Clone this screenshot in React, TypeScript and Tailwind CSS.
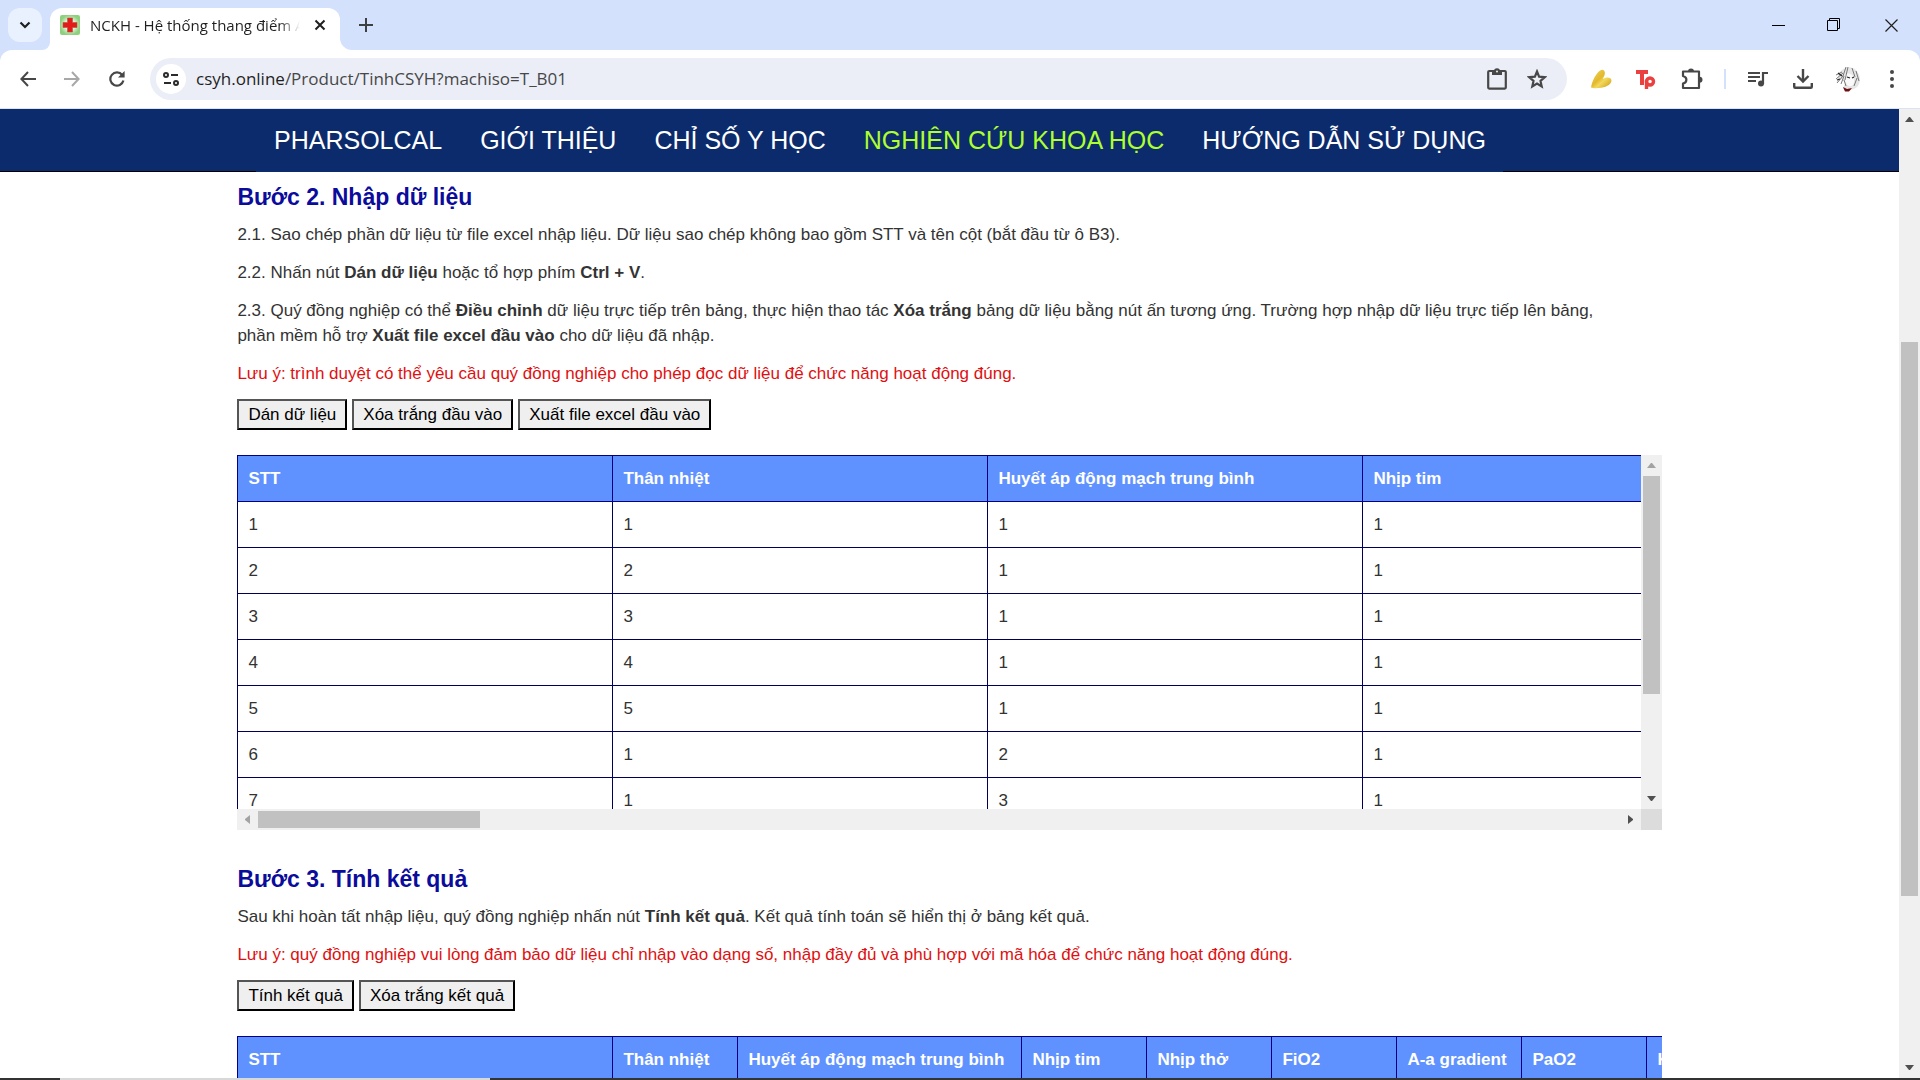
import type { ReactNode } from "react";

const navLinks = [
  { label: "PHARSOLCAL", active: false },
  { label: "GIỚI THIỆU", active: false },
  { label: "CHỈ SỐ Y HỌC", active: false },
  { label: "NGHIÊN CỨU KHOA HỌC", active: true },
  { label: "HƯỚNG DẪN SỬ DỤNG", active: false },
];

const inputColumns = ["STT", "Thân nhiệt", "Huyết áp động mạch trung bình", "Nhịp tim"];

const inputRows = [
  [1, 1, 1, 1],
  [2, 2, 1, 1],
  [3, 3, 1, 1],
  [4, 4, 1, 1],
  [5, 5, 1, 1],
  [6, 1, 2, 1],
  [7, 1, 3, 1],
];

const resultColumns = [
  { label: "STT", width: "w-[375px]" },
  { label: "Thân nhiệt", width: "w-[125px]" },
  { label: "Huyết áp động mạch trung bình", width: "w-[284px]" },
  { label: "Nhịp tim", width: "w-[125px]" },
  { label: "Nhịp thở", width: "w-[125px]" },
  { label: "FiO2", width: "w-[125px]" },
  { label: "A-a gradient", width: "w-[125px]" },
  { label: "PaO2", width: "w-[125px]" },
  { label: "Kết quả", width: "w-[125px]" },
];

function Arrow({ dir, muted }: { dir: "up" | "down" | "left" | "right"; muted?: boolean }) {
  const points = {
    up: "0,5 9,5 5,0 4,0",
    down: "0,0 9,0 5,5 4,5",
    left: "5,0 5,9 0,5 0,4",
    right: "0,0 0,9 5,5 5,4",
  };
  const vertical = dir === "up" || dir === "down";
  return (
    <svg
      width={vertical ? 9 : 5}
      height={vertical ? 5 : 9}
      className={muted ? "fill-[#a3a3a3]" : "fill-[#505050]"}
      aria-hidden="true"
    >
      <polygon points={points[dir]} />
    </svg>
  );
}

function ActionButton({ children }: { children: ReactNode }) {
  return (
    <button
      type="button"
      className="h-[31px] border-2 border-t-[#555] border-l-[#555] border-r-black border-b-black bg-[#efefef] px-[9px] leading-[25px] text-black"
    >
      {children}
    </button>
  );
}

function TabStrip() {
  return (
    <div className="flex h-[50px] items-stretch bg-[#d3e1fd] pl-2">
      <button type="button" aria-label="Search tabs" className="mt-2 flex h-[34px] w-[34px] items-center justify-center rounded-xl bg-[#eaf1fe]">
        <svg width="12" height="8" viewBox="0 0 12 8" fill="none" stroke="#1f1f1f" strokeWidth="2.2">
          <path d="M1.5 1.5 6 6l4.5-4.5" />
        </svg>
      </button>

      {/* Active tab with its flared bottom corners */}
      <div className="flex">
        <span className="w-2 self-end bg-white">
          <span className="block h-3 rounded-br-xl bg-[#d3e1fd]" />
        </span>
        <div className="mt-2 flex w-[290px] items-center rounded-t-xl bg-white pb-2 pl-[10px]">
          <svg width="20" height="20" viewBox="0 0 20 20" className="shrink-0">
            <defs>
              <radialGradient id="fav">
                <stop offset="0.4" stopColor="#f3fbef" />
                <stop offset="1" stopColor="#8fd07f" />
              </radialGradient>
            </defs>
            <rect width="20" height="20" rx="2" fill="url(#fav)" />
            <path d="M7.5 3h5v4.5H17v5h-4.5V17h-5v-4.5H3v-5h4.5z" fill="#e31b1b" stroke="#b8503a" strokeWidth="0.6" />
          </svg>
          <span className="ml-[10px] w-[210px] overflow-hidden whitespace-nowrap bg-linear-to-r from-[#1f1f1f] from-90% to-transparent bg-clip-text font-[Open_Sans,Noto_Sans,sans-serif] text-[15px] leading-5 text-transparent">
            NCKH - Hệ thống thang điểm A
          </span>
          <button type="button" aria-label="Close tab" className="ml-[14px]">
            <svg width="12" height="12" viewBox="0 0 12 12" stroke="#1f1f1f" strokeWidth="2">
              <path d="m1.5 1.5 9 9m0-9-9 9" />
            </svg>
          </button>
        </div>
        <span className="w-3 self-end bg-white">
          <span className="block h-3 rounded-bl-xl bg-[#d3e1fd]" />
        </span>
      </div>

      <button type="button" aria-label="New tab" className="flex w-7 items-center justify-center">
        <svg width="14" height="14" viewBox="0 0 14 14" stroke="#3c4043" strokeWidth="2">
          <path d="M7 0v14M0 7h14" />
        </svg>
      </button>

      <div className="ml-auto flex">
        <button type="button" aria-label="Minimize" className="flex w-14 items-center justify-center">
          <svg width="13" height="13" stroke="#000"><path d="M0 6.5h13" /></svg>
        </button>
        <button type="button" aria-label="Restore" className="flex w-14 items-center justify-center">
          <svg width="14" height="14" fill="none" stroke="#000">
            <path d="M.5 2.5h10v10H.5zM2.5 2.5v-2h10v10h-2" />
          </svg>
        </button>
        <button type="button" aria-label="Close" className="flex w-[58px] items-center justify-center">
          <svg width="13" height="13" stroke="#1f1f1f" strokeWidth="1.2"><path d="m.5.5 12 12m0-12-12 12" /></svg>
        </button>
      </div>
    </div>
  );
}

function Toolbar() {
  return (
    <div className="bg-[#d3e1fd]">
      <div className="flex h-[59px] items-center rounded-t-xl border-b border-[#dbe3f0] bg-white">
        <button type="button" aria-label="Back" className="ml-4 flex w-6 justify-center">
          <svg width="16" height="16" viewBox="0 0 16 16" fill="none" stroke="#474747" strokeWidth="2">
            <path d="M16 8H1.5M8 1 1.4 8 8 15" />
          </svg>
        </button>
        <button type="button" aria-label="Forward" className="ml-5 flex w-6 justify-center">
          <svg width="16" height="16" viewBox="0 0 16 16" fill="none" stroke="#a8a8a8" strokeWidth="2">
            <path d="M0 8h14.5M8 1l6.6 7L8 15" />
          </svg>
        </button>
        <button type="button" aria-label="Reload" className="ml-[21px] flex w-6 justify-center">
          <svg width="16" height="16" viewBox="0 0 16 16" fill="none" stroke="#474747" strokeWidth="2.2">
            <path d="M13.2 4A6.6 6.6 0 1 0 14.4 9.500" />
            <path d="M15.600 0v6.600H9z" fill="#474747" stroke="none" />
          </svg>
        </button>

        <div className="ml-[21px] flex h-[42px] flex-1 items-center rounded-full bg-[#ebeef7]">
          <button type="button" aria-label="View site information" className="ml-[6px] flex h-[30px] w-[30px] items-center justify-center rounded-full bg-white">
            <svg width="16" height="14" viewBox="0 0 16 14" fill="none" stroke="#2b2b2b" strokeWidth="2">
              <circle cx="3" cy="3" r="2" />
              <path d="M8 3h7M1 11h7" />
              <circle cx="13" cy="11" r="2" />
            </svg>
          </button>
          <a href="#top" className="ml-[10px] flex-1 font-[Open_Sans,Noto_Sans,sans-serif] text-[17px] leading-6 text-[#474747]">
            <span className="text-[#1f1f1f]">csyh.online</span>/Product/TinhCSYH?machiso=T_B01
          </a>
          <button type="button" aria-label="Clipboard" className="flex w-6 justify-center">
            <svg width="20" height="22" viewBox="0 0 20 22" fill="none" stroke="#474747" strokeWidth="2.2">
              <rect x="1.2" y="3" width="17.600" height="17.600" rx="1" />
              <path d="M5 3h10v4H5z" fill="#474747" stroke="none" />
              <circle cx="10" cy="3.200" r="3" fill="#474747" stroke="none" />
              <circle cx="10" cy="3.400" r="1" fill="#ebeef7" stroke="none" />
            </svg>
          </button>
          <button type="button" aria-label="Bookmark this page" className="mr-[18px] ml-4 flex w-6 justify-center">
            <svg width="20" height="20" viewBox="0 0 20 20" fill="none" stroke="#474747" strokeWidth="2.200">
              <path d="m10 2.500 2.100 5.200 5.600.500-4.200 3.700 1.200 5.500-4.700-2.900-4.700 2.900 1.200-5.500-4.200-3.700 5.600-.500z" />
            </svg>
          </button>
        </div>

        <button type="button" aria-label="Extension" className="ml-[22px] flex w-6 justify-center">
          <svg width="22" height="20" viewBox="0 0 22 20">
            <defs>
              <linearGradient id="gold" x1="0" y1="0" x2="1" y2="1">
                <stop offset="0" stopColor="#f0d75a" />
                <stop offset="0.45" stopColor="#e3b92e" />
                <stop offset="0.6" stopColor="#f3d95c" />
                <stop offset="1" stopColor="#c9980f" />
              </linearGradient>
            </defs>
            <path d="M1 18.500C2 12 7 2 12 .8c4 .2 3.500 5 .8 9.200 3.500-2.500 8-2 8.600.8.6 4-4 7-10 8-4 .6-8 .8-10.400-.3z" fill="url(#gold)" />
          </svg>
        </button>
        <button type="button" aria-label="Toolkit for page" className="ml-[21px] flex w-6 justify-center">
          <svg width="20" height="19" viewBox="0 0 20 19" fill="none" stroke="#ea4040" strokeWidth="4">
            <path d="M0 2h12M6 2v13" />
            <circle cx="14" cy="11.5" r="3.5" strokeWidth="3.4" />
            <path d="M10.500 10v9" strokeWidth="3.4" />
          </svg>
        </button>
        <button type="button" aria-label="Extensions" className="ml-[22px] flex w-6 justify-center">
          <svg width="22" height="22" viewBox="0 0 22 22" fill="none" stroke="#474747" strokeWidth="2.2">
            <path d="M2 3.500h16v16.500H2v-4.500c4.500-1 4.500-6.500 0-7.500z" strokeLinejoin="round" />
            <path d="M7 3.500a3 3 0 0 1 6 0zM18.500 8.800a3 3 0 0 1 0 6z" fill="#474747" stroke="none" />
          </svg>
        </button>
        <span className="ml-[20px] h-5 w-[2px] bg-[#d3e1fd]" />
        <button type="button" aria-label="Media controls" className="ml-5 flex w-6 justify-center">
          <svg width="20" height="16" viewBox="0 0 20 16" fill="none" stroke="#474747" strokeWidth="2.200">
            <path d="M0 2h12M0 6h12M0 10h8M15 13V2h5" />
            <circle cx="13" cy="12.500" r="3" fill="#474747" stroke="none" />
          </svg>
        </button>
        <button type="button" aria-label="Downloads" className="ml-[21px] flex w-6 justify-center">
          <svg width="20" height="20" viewBox="0 0 20 20" fill="none" stroke="#474747" strokeWidth="2.4">
            <path d="M10 0v12M4.500 7l5.500 5.500L15.500 7M1.200 14v3.800a1 1 0 0 0 1 1h15.600a1 1 0 0 0 1-1V14" />
          </svg>
        </button>
        <button type="button" aria-label="Profile" className="ml-[21px] flex w-6 justify-center">
          <svg width="26" height="26" viewBox="0 0 26 26" className="shrink-0">
            <path d="M4 7C8 1 16-1 21 4c5 5 5 13 1 17-5 4-11 4-14 2l2-6-3-4-5 3z" fill="#e6e6e6" />
            <path d="M10 9c4-3 8-1 9 4s-2 8-5 7-5-7-4-11z" fill="#fafafa" />
            <path d="M1 9l6-3M1 13l7-6M2 17l6-7M6 18l3-8M11 1l-3 9M13 1l-3 13M17 2l3 9M21 5l3 10M22 12l-3 8M9 14l2 6" stroke="#6b6b6b" strokeWidth="0.9" fill="none" />
            <path d="M3 7l4 3M2 14l3-1M12 11l3 1M17 12l2-1" stroke="#222" strokeWidth="1.200" fill="none" />
            <path d="M8 21l4 2 5-1-3 3.500h-4z" fill="#6d1010" />
          </svg>
        </button>
        <button type="button" aria-label="Menu" className="mr-4 ml-5 flex w-6 justify-center">
          <svg width="4" height="18" fill="#474747">
            <circle cx="2" cy="2" r="2" />
            <circle cx="2" cy="9" r="2" />
            <circle cx="2" cy="16" r="2" />
          </svg>
        </button>
      </div>
    </div>
  );
}

function InputTable() {
  return (
    <div className="mt-[25px] grid h-[375px] grid-cols-[minmax(0,1fr)_21px] grid-rows-[minmax(0,1fr)_21px]">
      <div className="overflow-hidden">
        <table className="w-[1501px] table-fixed border-collapse text-left">
          <thead>
            <tr className="h-[46px] bg-[#5f92ff] text-white">
              {inputColumns.map((col) => (
                <th key={col} className="border border-[#000080] px-[10px] leading-[25px]">{col}</th>
              ))}
            </tr>
          </thead>
          <tbody>
            {inputRows.map((row) => (
              <tr key={row[0]} className="h-[46px]">
                {row.map((value, i) => (
                  <td key={i} className="border border-[#000058] px-[10px] leading-[25px]">{value}</td>
                ))}
              </tr>
            ))}
          </tbody>
        </table>
      </div>

      {/* Scrollbars */}
      <div className="flex flex-col items-center bg-[#f0f0f0]">
        <span className="flex h-[21px] items-center"><Arrow dir="up" muted /></span>
        <span className="h-[218px] w-[17px] bg-[#c1c1c1]" />
        <span className="mt-auto flex h-[21px] items-center"><Arrow dir="down" /></span>
      </div>
      <div className="flex items-center bg-[#f0f0f0]">
        <span className="flex w-[21px] justify-center"><Arrow dir="left" muted /></span>
        <span className="h-[17px] w-[222px] bg-[#c1c1c1]" />
        <span className="ml-auto flex w-[21px] justify-center"><Arrow dir="right" /></span>
      </div>
      <div className="bg-[#dcdcdc]" />
    </div>
  );
}

export default function App() {
  return (
    <div className="flex h-screen flex-col overflow-hidden bg-white font-['Liberation_Sans',Arial,sans-serif] text-[17px] text-[#333]">
      <TabStrip />
      <Toolbar />

      <div className="flex min-h-0 flex-1">
        <div className="min-w-0 flex-1 overflow-hidden">
          <nav className="flex h-[62px] items-center gap-[38px] bg-[#0c2b6c] pl-[274px] text-[25px] leading-8 whitespace-nowrap">
            {navLinks.map((link) => (
              <a key={link.label} href="#top" className={link.active ? "text-[#adff2f]" : "text-white"}>
                {link.label}
              </a>
            ))}
          </nav>
          {/* The nav's bottom line is dark only outside the menu */}
          <div className="flex h-px bg-black">
            <span className="ml-64 w-[1247px] bg-[#0c2b6c]" />
          </div>

          <main className="mx-auto w-3/4 max-w-[1425px] pt-[13px] leading-[25px]">
            {/* Step 2 */}
            <section>
              <h4 className="text-[23px] font-bold text-[#0b0b9c]">Bước 2. Nhập dữ liệu</h4>
              <div className="mt-3 flex flex-col gap-[13px] pr-8">
                <p>2.1. Sao chép phần dữ liệu từ file excel nhập liệu. Dữ liệu sao chép không bao gồm STT và tên cột (bắt đầu từ ô B3).</p>
                <p>2.2. Nhấn nút <b>Dán dữ liệu</b> hoặc tổ hợp phím <b>Ctrl + V</b>.</p>
                <p>
                  2.3. Quý đồng nghiệp có thể <b>Điều chỉnh</b> dữ liệu trực tiếp trên bảng, thực hiện thao tác <b>Xóa trắng</b> bảng dữ liệu bằng nút ấn tương ứng. Trường hợp nhập dữ liệu trực tiếp lên bảng, phần mềm hỗ trợ <b>Xuất file excel đầu vào</b> cho dữ liệu đã nhập.
                </p>
                <p className="text-[#e01010]">Lưu ý: trình duyệt có thể yêu cầu quý đồng nghiệp cho phép đọc dữ liệu để chức năng hoạt động đúng.</p>
                <div className="flex gap-[5px]">
                  <ActionButton>Dán dữ liệu</ActionButton>
                  <ActionButton>Xóa trắng đầu vào</ActionButton>
                  <ActionButton>Xuất file excel đầu vào</ActionButton>
                </div>
              </div>
              <InputTable />
            </section>

            {/* Step 3 */}
            <section className="mt-[37px]">
              <h4 className="text-[23px] font-bold text-[#0b0b9c]">Bước 3. Tính kết quả</h4>
              <div className="mt-3 flex flex-col gap-[13px] pr-8">
                <p>Sau khi hoàn tất nhập liệu, quý đồng nghiệp nhấn nút <b>Tính kết quả</b>. Kết quả tính toán sẽ hiển thị ở bảng kết quả.</p>
                <p className="text-[#e01010]">Lưu ý: quý đồng nghiệp vui lòng đảm bảo dữ liệu chỉ nhập vào dạng số, nhập đầy đủ và phù hợp với mã hóa để chức năng hoạt động đúng.</p>
                <div className="flex gap-[5px]">
                  <ActionButton>Tính kết quả</ActionButton>
                  <ActionButton>Xóa trắng kết quả</ActionButton>
                </div>
              </div>
              <div className="mt-[25px] overflow-hidden">
                <table className="w-[1535px] table-fixed border-collapse text-left">
                  <thead>
                    <tr className="h-[46px] bg-[#5f92ff] text-white">
                      {resultColumns.map((col) => (
                        <th key={col.label} className={`${col.width} border border-[#000080] px-[10px] leading-[25px] whitespace-nowrap`}>
                          {col.label}
                        </th>
                      ))}
                    </tr>
                  </thead>
                </table>
              </div>
            </section>
          </main>
        </div>

        {/* Page scrollbar */}
        <div className="flex w-[21px] flex-col items-center bg-[#f0f0f0]">
          <span className="flex h-[21px] items-center"><Arrow dir="up" /></span>
          <span className="mt-[212px] h-[554px] w-[17px] bg-[#c1c1c1]" />
          <span className="mt-auto flex h-[21px] items-center"><Arrow dir="down" /></span>
        </div>
      </div>

      {/* Top edge of the taskbar */}
      <div className="flex h-[2px] shrink-0 bg-[#333]">
        <span className="ml-[60px] w-[430px] bg-[#d8d8d8]" />
      </div>
    </div>
  );
}
